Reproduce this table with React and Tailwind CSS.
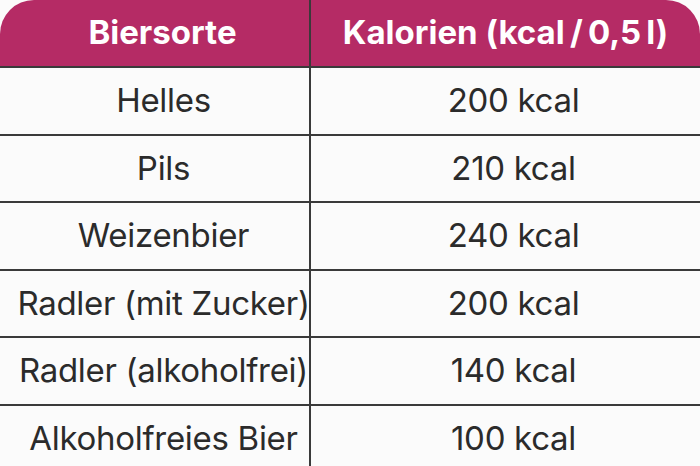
import React from "react";

const rows = [
  ["Helles", "200 kcal"],
  ["Pils", "210 kcal"],
  ["Weizenbier", "240 kcal"],
  ["Radler (mit Zucker)", "200 kcal"],
  ["Radler (alkoholfrei)", "140 kcal"],
  ["Alkoholfreies Bier", "100 kcal"],
];

export default function App() {
  return (
    <div
      className="w-[700px] h-[466px] overflow-hidden bg-[#fbfbfb] text-[#2b2b2b]"
      style={{ fontFamily: "Inter, 'Noto Sans', sans-serif" }}
    >
      {/* header */}
      <div className="grid grid-cols-[311px_389px] h-[68px] bg-[#b52b65] rounded-t-[34px] border-b-2 border-[#3a3a3a] text-white font-bold text-[33px] tracking-[0px]">
        <div className="flex items-center justify-center pl-[16px] border-r-2 border-[#3a3a3a]">
          Biersorte
        </div>
        <div className="flex items-center justify-center whitespace-nowrap">
          Kalorien (kcal{"\u2009/\u2009"}0,5{"\u2009"}l)
        </div>
      </div>

      {/* body */}
      {rows.map(([sorte, kcal], i) => (
        <div
          key={i}
          className="grid grid-cols-[311px_389px] h-[67.5px] border-b-2 border-[#3a3a3a] text-[33px] tracking-[-0.3px]"
        >
          <div className="flex items-center justify-center pl-[18px] border-r-2 border-[#3a3a3a] whitespace-nowrap">
            {sorte}
          </div>
          <div className="flex items-center justify-center pl-[16px]">
            {kcal}
          </div>
        </div>
      ))}
    </div>
  );
}
